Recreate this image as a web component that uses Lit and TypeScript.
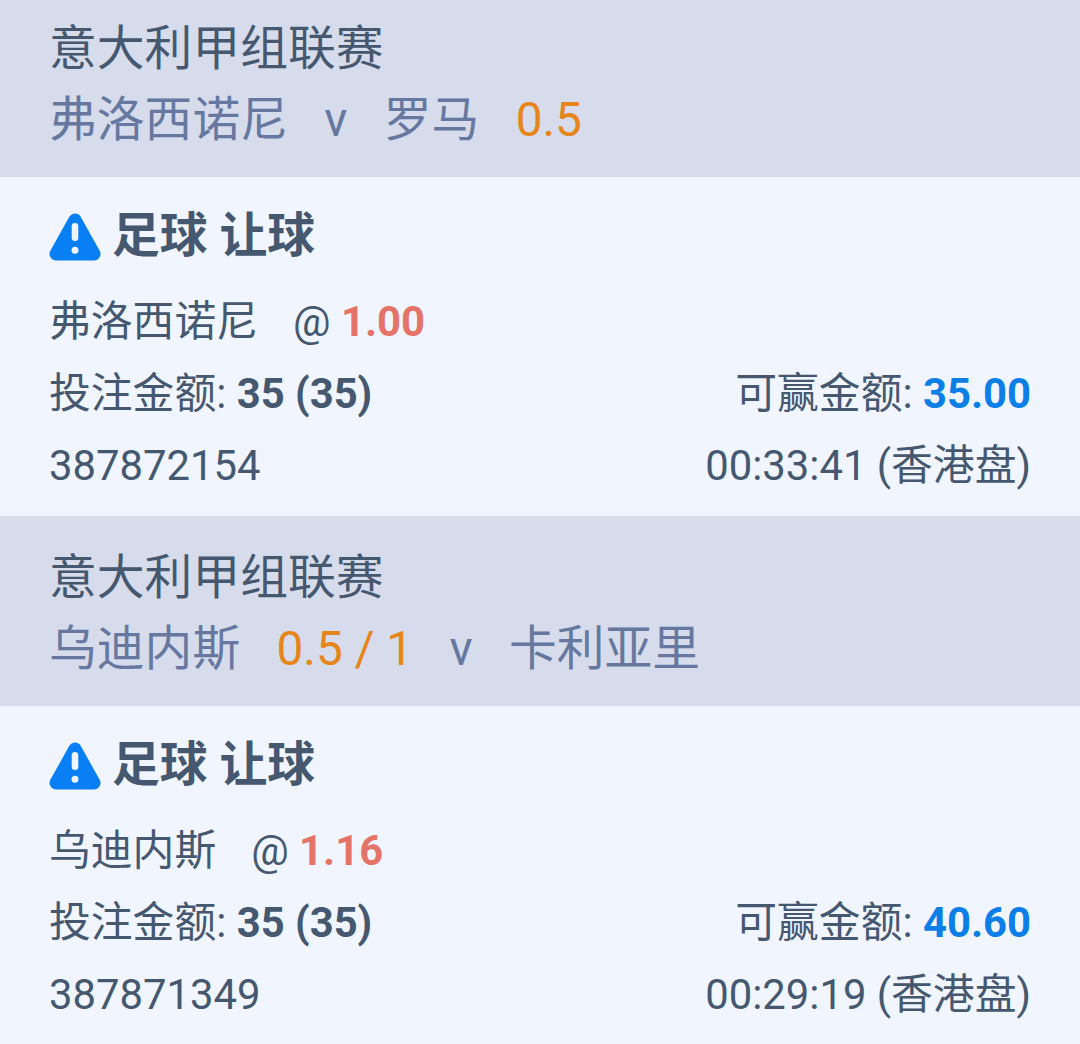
import { LitElement, css, html } from 'lit';
import { customElement, property } from 'lit/decorators.js';
import { classMap } from 'lit/directives/class-map.js';

type PartType = 'team' | 'versus' | 'handicap';

interface Part {
  type: PartType;
  text: string;
}

interface Bet {
  id: string;
  league: string;
  match: Part[];
  market: string;
  pick: string;
  odds: string;
  stake: string;
  win: string;
  time: string;
}

const BETS: Bet[] = [
  {
    id: '387872154',
    league: '意大利甲组联赛',
    match: [
      { type: 'team', text: '弗洛西诺尼' },
      { type: 'versus', text: 'v' },
      { type: 'team', text: '罗马' },
      { type: 'handicap', text: '0.5' },
    ],
    market: '足球 让球',
    pick: '弗洛西诺尼',
    odds: '1.00',
    stake: '35 (35)',
    win: '35.00',
    time: '00:33:41 (香港盘)',
  },
  {
    id: '387871349',
    league: '意大利甲组联赛',
    match: [
      { type: 'team', text: '乌迪内斯' },
      { type: 'handicap', text: '0.5 / 1' },
      { type: 'versus', text: 'v' },
      { type: 'team', text: '卡利亚里' },
    ],
    market: '足球 让球',
    pick: '乌迪内斯',
    odds: '1.16',
    stake: '35 (35)',
    win: '40.60',
    time: '00:29:19 (香港盘)',
  },
];

@customElement('bet-ticket')
export class BetTicket extends LitElement {
  static styles = css`
    :host {
      display: block;
      white-space: nowrap;
    }

    .header {
      box-sizing: border-box;
      height: 190px;
      padding: 27px 49px 0;
      background: #d6dceb;
      font-size: 47.8px;
      line-height: 71px;
    }

    .match {
      display: flex;
      gap: 36.3px;
      color: #6778a0;
    }

    .handicap {
      color: #e6861a;
    }

    .body {
      box-sizing: border-box;
      height: 339px;
      padding: 23px 49px 0;
      font-size: 41.8px;
      line-height: 72px;
    }

    .market {
      display: flex;
      align-items: center;
      gap: 11px;
      height: 72px;
      margin-bottom: 14px;
      font-size: 47.8px;
      font-weight: 700;
    }

    .icon {
      width: 52px;
      height: 48px;
      margin-top: 2px;
    }

    .row {
      display: flex;
      justify-content: space-between;
      height: 72px;
    }

    .pick {
      justify-content: flex-start;
      gap: 35px;
    }

    .odds {
      color: #e57368;
    }

    .win {
      color: #0c7ee8;
    }
  `;

  @property({ attribute: false })
  bet!: Bet;

  renderPart(part: Part) {
    return html`<span class=${classMap({ [part.type]: true })}>${part.text}</span>`;
  }

  render() {
    const { bet } = this;
    return html`
      <div class="header">
        <div class="league">${bet.league}</div>
        <div class="match">${bet.match.map(part => this.renderPart(part))}</div>
      </div>
      <div class="body">
        <div class="market">${warningIcon}<span>${bet.market}</span></div>
        <div class="row pick"><span>${bet.pick}</span><span>@ <b class="odds">${bet.odds}</b></span></div>
        <div class="row"><span>投注金额: <b>${bet.stake}</b></span><span>可赢金额: <b class="win">${bet.win}</b></span></div>
        <div class="row"><span>${bet.id}</span><span>${bet.time}</span></div>
      </div>
    `;
  }
}

@customElement('app-root')
export class AppRoot extends LitElement {
  static styles = css`
    :host {
      display: flow-root;
      height: 1044px;
      overflow: hidden;
      background: #f0f5ff;
      color: #465870;
      font-family: Roboto, 'Noto Sans CJK SC', sans-serif;
    }

    .list {
      margin-top: -13px;
    }
  `;

  render() {
    return html`<div class="list">${BETS.map(bet => html`<bet-ticket .bet=${bet}></bet-ticket>`)}</div>`;
  }
}

const warningIcon = html`
  <svg class="icon" viewBox="0 0 52 48">
    <path fill="#087ff5" stroke="#087ff5" stroke-width="13" stroke-linejoin="round" d="M26 7L45 41H7Z" />
    <rect x="22.7" y="10" width="6.6" height="18" rx="3.3" fill="#f0f5ff" />
    <circle cx="26" cy="37.3" r="3.5" fill="#f0f5ff" />
  </svg>
`;
